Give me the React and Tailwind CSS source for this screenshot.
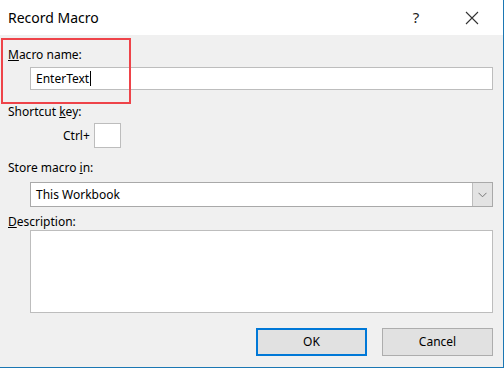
export default function App() {
  const font = { fontFamily: '"Segoe UI", "Noto Sans", "Open Sans", sans-serif' };
  return (
    <div className="w-[504px] h-[368px] flex flex-col bg-[#f0f0f0] border-r border-b border-[#1b77b3] relative overflow-hidden text-[#000]" style={font}>
      <div className="h-[35px] bg-white flex items-center shrink-0">
        <span className="ml-[8px] text-[14px] text-black">Record Macro</span>
        <span className="ml-auto text-[15px] text-[#222] w-[30px] text-center">?</span>
        <svg className="ml-[34px] mr-[24px]" width="14" height="14" viewBox="0 0 14 14">
          <path d="M1 1 L13 13 M13 1 L1 13" stroke="#333" strokeWidth="1.1" fill="none" />
        </svg>
      </div>

      <div className="flex flex-col pl-[8px] pr-[10px] pt-[12px] text-[12px]">
        <div className="h-[16px] leading-[16px]"><u>M</u>acro name:</div>
        <div className="ml-[22px] mt-[4px] h-[23px] bg-white border border-[#bdbdbd] flex items-center pl-[5px]">
          <span>EnterText</span>
          <span className="w-px h-[15px] bg-black ml-[1px]"></span>
        </div>

        <div className="h-[16px] leading-[16px] mt-[14px]">Shortcut <u>k</u>ey:</div>
        <div className="flex items-center mt-[3px] ml-[55px]">
          <span>Ctrl+</span>
          <div className="ml-[4px] w-[27px] h-[25px] bg-white border border-[#bdbdbd]"></div>
        </div>

        <div className="h-[16px] leading-[16px] mt-[12px]">Store macro <u>i</u>n:</div>
        <div className="ml-[22px] mt-[6px] h-[25px] bg-white border border-[#a9a9a9] flex items-center">
          <span className="pl-[5px]">This Workbook</span>
          <div className="ml-auto h-full w-[20px] bg-[#e3e3e3] border-l border-[#bdbdbd] flex items-center justify-center">
            <svg width="9" height="6" viewBox="0 0 9 6">
              <path d="M0.5 0.8 L4.5 4.8 L8.5 0.8" stroke="#777" strokeWidth="1" fill="none" />
            </svg>
          </div>
        </div>

        <div className="h-[16px] leading-[16px] mt-[7px]"><u>D</u>escription:</div>
        <div className="ml-[22px] mt-[0px] h-[83px] bg-white border border-[#bdbdbd]"></div>

        <div className="flex justify-end gap-[15px] mt-[15px]">
          <button className="w-[111px] h-[28px] bg-[#e1e1e1] border-2 border-[#0078d7] text-[12px]">OK</button>
          <button className="w-[111px] h-[28px] bg-[#e1e1e1] border border-[#adadad] text-[12px]">Cancel</button>
        </div>
      </div>

      <div className="absolute left-[1px] top-[38px] w-[130px] h-[66px] border-2 border-[#ee4349]"></div>
    </div>
  );
}
